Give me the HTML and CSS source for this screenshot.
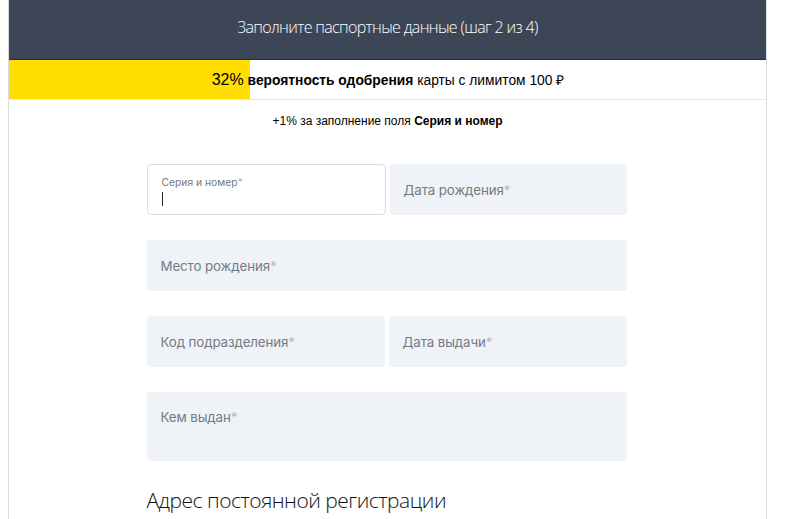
FILE: index.html
```html
<!DOCTYPE html>
<html lang="ru">
<head>
<meta charset="utf-8">
<title>Паспортные данные</title>
<link rel="stylesheet" href="styles.css">
</head>
<body>
<div class="page">
  <header class="top">Заполните паспортные данные (шаг 2 из 4)</header>
  <div class="progress">
    <div class="progress-fill" style="width: 241px"></div>
    <div class="progress-text"><span class="pct">32%</span> <b>вероятность одобрения</b> карты с лимитом 100 ₽</div>
  </div>
  <p class="hint">+1% за заполнение поля <b>Серия и номер</b></p>
  <form class="form">
    <div class="row two">
      <div class="field focused">
        <span class="small-label">Серия и номер<i>*</i></span>
        <span class="caret"></span>
      </div>
      <div class="field"><span class="label">Дата рождения<i>*</i></span></div>
    </div>
    <div class="row">
      <div class="field"><span class="label">Место рождения<i>*</i></span></div>
    </div>
    <div class="row two">
      <div class="field"><span class="label">Код подразделения<i>*</i></span></div>
      <div class="field"><span class="label">Дата выдачи<i>*</i></span></div>
    </div>
    <div class="row">
      <div class="field tall"><span class="label">Кем выдан<i>*</i></span></div>
    </div>
    <h2 class="section">Адрес постоянной регистрации</h2>
  </form>
</div>
</body>
</html>
```

FILE: styles.css
```css
* { box-sizing: border-box; }
html, body { margin: 0; padding: 0; background: #fff; }
body { font-family: "Liberation Sans", Arial, sans-serif; color: #000; }

.page {
  margin-left: 8px;
  width: 759px;
  min-height: 519px;
  border-left: 1px solid #dcdcdc;
  border-right: 1px solid #dcdcdc;
}

.top {
  height: 60px;
  background: #3d4657;
  border-bottom: 1px solid #242c3a;
  color: #fff;
  font-family: "Open Sans", sans-serif;
  font-weight: 300;
  font-size: 16px;
  letter-spacing: -0.65px;
  display: flex;
  align-items: center;
  justify-content: center;
  padding-bottom: 6px;
}

.progress {
  position: relative;
  height: 40px;
  border-bottom: 1px solid #e6e6e6;
  display: flex;
  align-items: center;
  justify-content: center;
}
.progress-fill {
  position: absolute;
  left: 0; top: 0; bottom: 0;
  background: #ffde00;
}
.progress-text {
  position: relative;
  font-size: 13.8px;
  padding-left: 1px;
}
.progress-text .pct { font-size: 16px; }

.hint {
  margin: 14px 0 0;
  text-align: center;
  font-size: 12px;
  padding-left: 0;
}

.form {
  width: 480px;
  margin: 36px auto 0;
  font-family: "Inter", sans-serif;
  position: relative;
  left: -1px;
}
.row { margin-bottom: 25px; display: flex; }
.row.two { gap: 4px; }
.field {
  flex: 1;
  height: 51px;
  background: #eff2f7;
  border-radius: 4px;
  display: flex;
  align-items: center;
  padding: 0 14px;
  position: relative;
}
.field.tall { height: 69px; align-items: flex-start; padding-top: 17px; }
.label { font-size: 13.3px; letter-spacing: -0.1px; color: #757a84; }
.label i, .small-label i { font-style: normal; color: #b5b9c1; }
.field.focused {
  background: #fff;
  border: 1px solid #dcdde0;
  flex-direction: column;
  align-items: flex-start;
  justify-content: flex-start;
  padding-top: 11px;
}
.small-label { font-size: 10.3px; color: #757a84; }
.caret {
  display: block;
  width: 1px;
  height: 14px;
  background: #222;
  margin-top: 4px;
}

.section {
  margin: 14px 0 0;
  font-family: "Open Sans", sans-serif;
  font-weight: 300;
  font-size: 21px;
  letter-spacing: -0.5px;
  color: #111;
}
```
